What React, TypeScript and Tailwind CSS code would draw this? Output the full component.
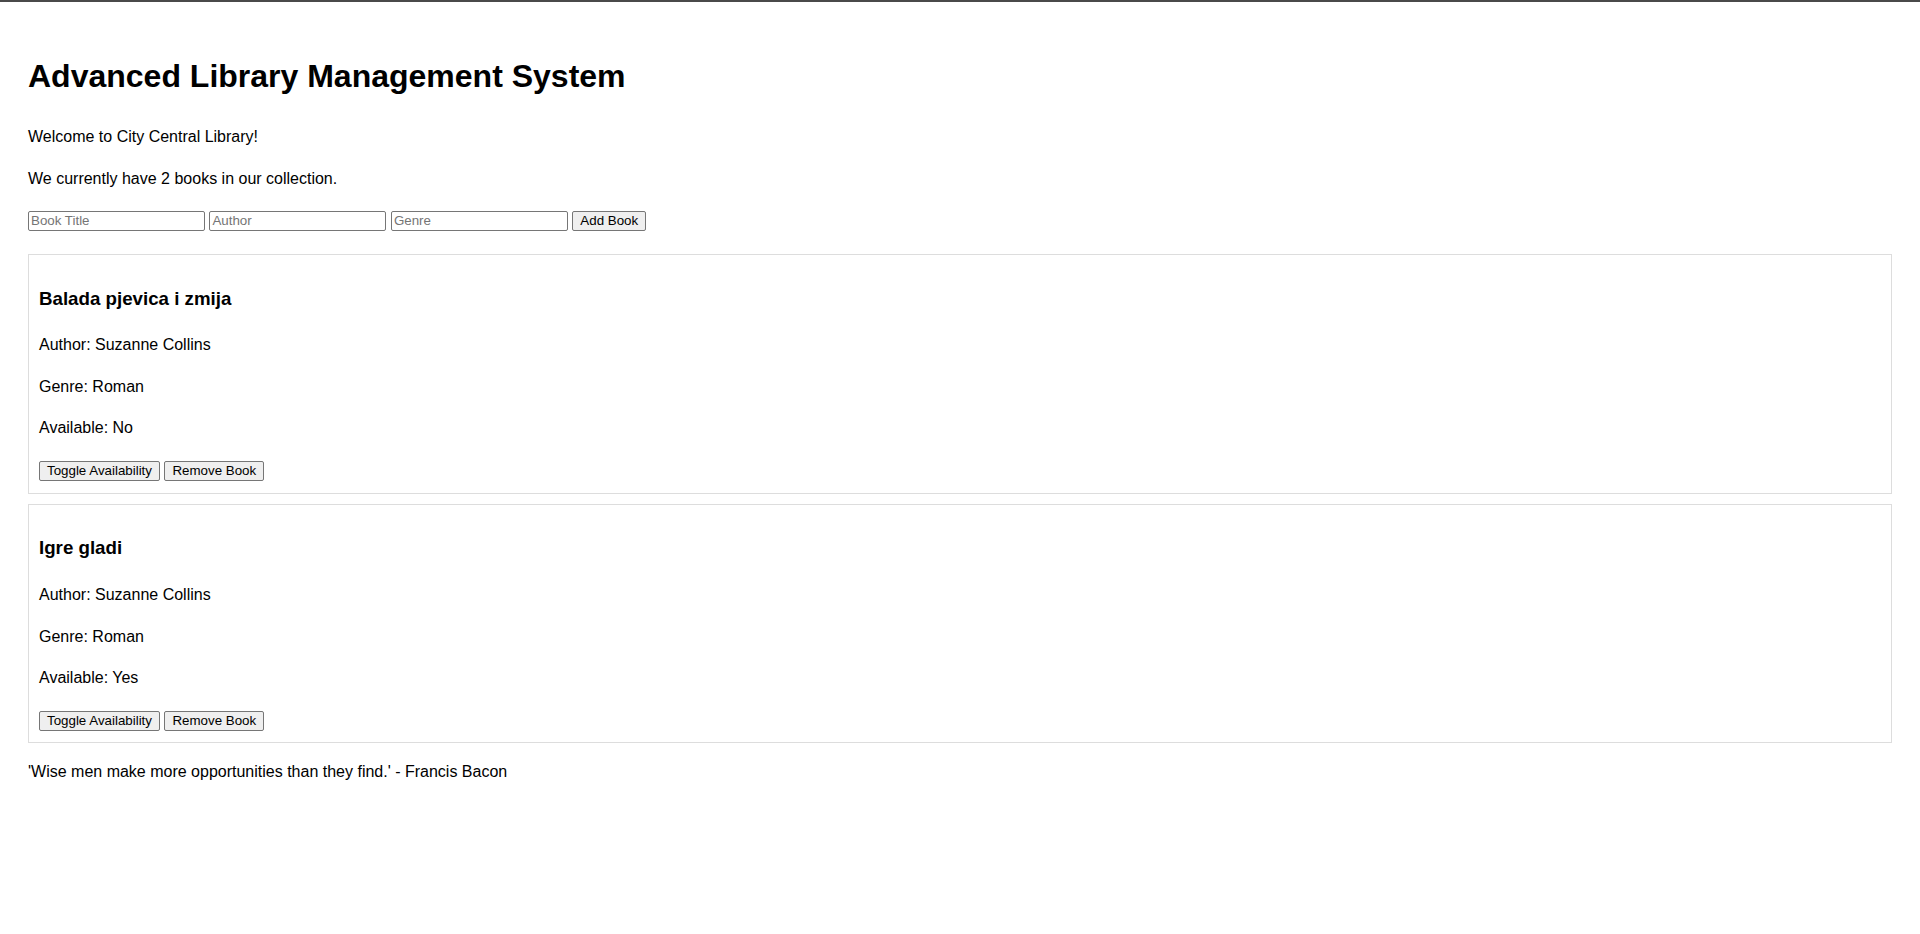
import React, { useState } from "react";

type Book = { title: string; author: string; genre: string; available: boolean };

export default function App() {
  const [books, setBooks] = useState<Book[]>([
    { title: "Balada pjevica i zmija", author: "Suzanne Collins", genre: "Roman", available: false },
    { title: "Igre gladi", author: "Suzanne Collins", genre: "Roman", available: true },
  ]);
  const [title, setTitle] = useState("");
  const [author, setAuthor] = useState("");
  const [genre, setGenre] = useState("");

  const btn =
    "inline-block h-[20px] px-[7px] bg-[#efefef] border border-[#767676] rounded-[2px] text-[13.333px] leading-[16px] text-black align-baseline";
  const inp =
    "inline-block w-[177px] h-[20px] px-[2px] border border-[#767676] rounded-[2px] text-[13.333px] leading-[16px] text-black placeholder:text-[#757575] align-baseline";

  return (
    <div className="min-h-[934px] border-t-2 border-[#4a4a4a] bg-white text-black font-['Liberation_Sans',Arial,sans-serif] text-[16px] leading-[1.6]">
      <div className="m-[8px] p-[20px]">
        <h1 className="text-[32px] font-bold my-[21.44px]">Advanced Library Management System</h1>
        <p className="my-[16px]">Welcome to City Central Library!</p>
        <p className="my-[16px]">We currently have {books.length} books in our collection.</p>
        <div className="mt-[16px] mb-[21px]">
          <input className={inp} placeholder="Book Title" value={title} onChange={(e) => setTitle(e.target.value)} />{" "}
          <input className={inp} placeholder="Author" value={author} onChange={(e) => setAuthor(e.target.value)} />{" "}
          <input className={inp} placeholder="Genre" value={genre} onChange={(e) => setGenre(e.target.value)} />{" "}
          <button
            className={btn}
            onClick={() => {
              if (!title) return;
              setBooks([...books, { title, author, genre, available: true }]);
              setTitle("");
              setAuthor("");
              setGenre("");
            }}
          >
            Add Book
          </button>
        </div>
        <div>
          {books.map((b, i) => (
            <div key={i} className="border border-[#dddddd] p-[10px] mb-[10px]">
              <h3 className="text-[18.72px] font-bold my-[18.72px]">{b.title}</h3>
              <p className="my-[16px]">Author: {b.author}</p>
              <p className="my-[16px]">Genre: {b.genre}</p>
              <p className="my-[16px]">Available: {b.available ? "Yes" : "No"}</p>
              <button
                className={btn}
                onClick={() => setBooks(books.map((x, j) => (j === i ? { ...x, available: !x.available } : x)))}
              >
                Toggle Availability
              </button>{" "}
              <button className={btn} onClick={() => setBooks(books.filter((_, j) => j !== i))}>
                Remove Book
              </button>
            </div>
          ))}
        </div>
        <p className="my-[16px]">'Wise men make more opportunities than they find.' - Francis Bacon</p>
      </div>
    </div>
  );
}
